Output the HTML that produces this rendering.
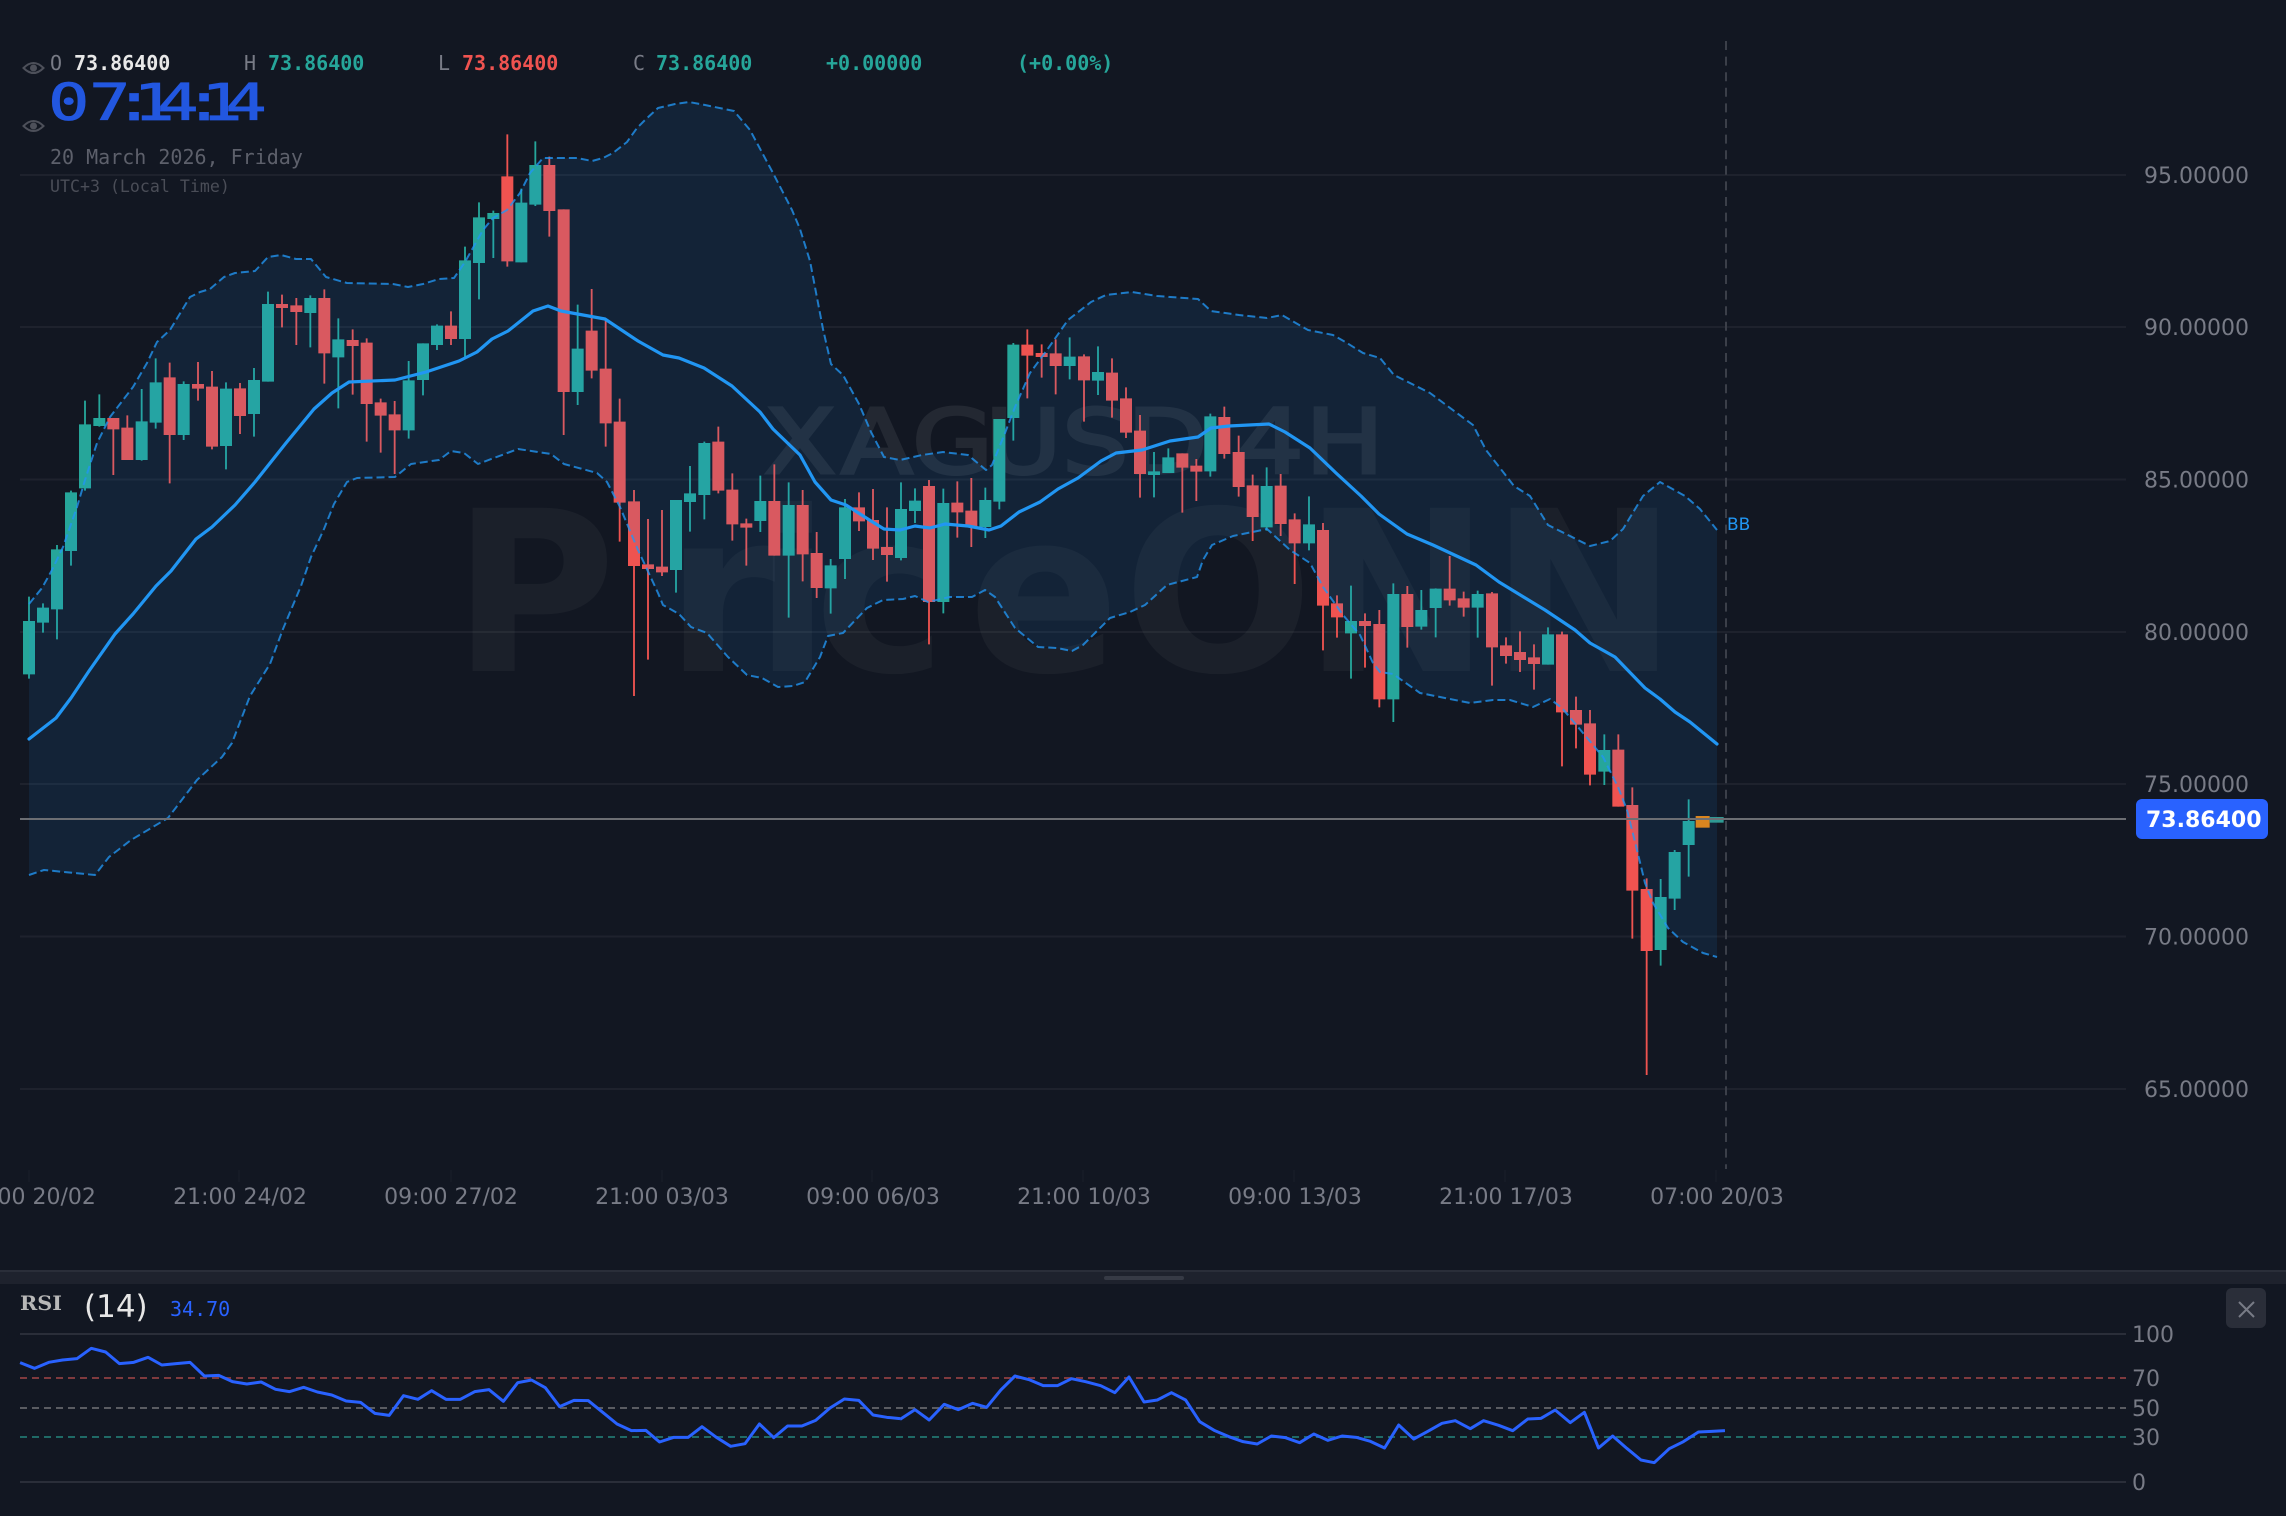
<!DOCTYPE html>
<html lang="en">
<head>
<meta charset="utf-8">
<title>XAGUSD 4H - PriceONN</title>
<style>
html,body{margin:0;padding:0;width:2286px;height:1516px;overflow:hidden;background:#121722}
svg{display:block;position:absolute;left:0;top:0}
.w,.b{fill:none}
.w{stroke-width:5.5}
.b{stroke-width:36}
.g{stroke:#26a69a}
.r{stroke:#ef5350}
.m{font-family:"DejaVu Sans Mono","Liberation Mono",monospace}
.s{font-family:"DejaVu Sans","Liberation Sans",sans-serif}
.ax{font-size:22px;fill:#787b86}
</style>
</head>
<body>
<svg width="2286" height="1516" viewBox="0 0 2286 1516" xmlns="http://www.w3.org/2000/svg">
<rect width="2286" height="1516" fill="#121722"/>

<!-- watermarks -->
<text class="s" font-weight="700" font-size="224" fill="#fff" fill-opacity=".04" y="671" x="452 665 754 814 968 1123 1303 1490">PriceONN</text>
<g style="opacity:.07" transform="translate(0,473) scale(1.18,1)">
<text class="s" font-size="89" fill="#fff" stroke="#fff" stroke-width="3" y="0" x="647.500 712.700 772.900 834.700 900 955 1040 1048.300 1106">XAGUSD 4H</text>
</g>

<!-- grid -->
<g stroke="#fff" stroke-opacity=".05" stroke-width="2">
<path d="M20 175H2126M20 327H2126M20 479.5H2126M20 632H2126M20 784H2126M20 936.5H2126M20 1089H2126"/>
<path d="M29 1170V1182M239 1170V1182M451 1170V1182M662 1170V1182M872 1170V1182M1083 1170V1182M1294 1170V1182M1505 1170V1182M1716 1170V1182" stroke-opacity=".02"/>
</g>

<!-- candles -->
<g transform="translate(10,280) scale(.33333)">
<path class="w g" d="M57 950V1196M99 970V1058M141 795V1078M183 632V857M225 362V632M268 343V440M395 327V542M437 235V446M521 304V480M648 307V568M732 264V470M774 35V305M901 46V202M985 115V385"/>
<path class="b g" d="M57 1023V1183M99 983V1028M141 808V988M183 637V813M225 433V625M268 414V438M395 424V540M437 307V428M521 312V465M648 326V498M732 300V402M774 72V305M901 54V99M985 178V232"/>
<path class="w r" d="M310 414V585M352 406V540M479 248V610M564 246V362M606 273V508M690 309V462M816 44V142M859 54V195M943 28V311M1028 148V344"/>
<path class="b r" d="M310 414V448M352 443V540M479 292V465M564 312V326M606 320V500M690 325V408M816 72V84M859 76V96M943 54V220M1028 180V198"/>
</g>
<g transform="translate(350,120) scale(.33333)">
<path class="w g" d="M176 723V956M219 670V826M261 613V690M345 380V712M387 247V538M430 272V414M514 206V427M556 64V258M683 554V855M978 1140V1418M1020 1038V1235"/>
<path class="b g" d="M176 781V931M219 670V780M261 617V675M345 421V657M387 292V429M430 279V297M514 248V427M556 135V254M683 686V816M978 1140V1350M1020 1120V1146"/>
<path class="w r" d="M50 655V965M92 836V998M134 843V1062M303 574V675M472 43V440M598 110V350M641 268V945M725 507V775M767 600V980M809 836V1265M852 1110V1728M894 1197V1619M936 1170V1368"/>
<path class="b r" d="M50 668V852M92 847V887M134 883V931M303 617V657M472 169V424M598 135V273M641 268V816M725 632V752M767 746V910M809 905V1148M852 1144V1338M894 1333V1347M936 1340V1357"/>
</g>
<g transform="translate(690,400) scale(.33333)">
<path class="w g" d="M43 125V358M211 227V396M296 247V653M422 477V641M465 297V537M633 247V481M675 265V369M760 266V640M886 263V414M928 57V328M970 -171V122"/>
<path class="b g" d="M43 129V285M211 303V363M296 315V467M422 496V565M465 322V477M633 327V474M675 302V333M760 309V606M886 300V381M928 57V305M970 -166V54"/>
<path class="w r" d="M85 80V280M127 220V422M169 356V497M253 193V467M338 270V544M380 396V594M507 277V393M549 267V480M591 322V545M717 240V733M802 244V413M844 234V441M1012 -212V-5"/>
<path class="b r" d="M85 125V272M127 269V373M169 370V383M253 303V467M338 315V463M380 459V564M507 322V364M549 360V446M591 441V465M717 258V606M802 308V337M844 332V382M1012 -166V-133"/>
</g>
<g transform="translate(1030,320) scale(.33333)">
<path class="w g" d="M119 52V178M204 79V225M372 396V532M415 385V459M541 281V470M710 442V632M837 529V691M963 797V1076"/>
<path class="b g" d="M119 110V138M204 156V182M372 454V465M415 412V459M541 289V454M710 498V622M837 613V670M963 903V940"/>
<path class="w r" d="M35 73V173M77 58V223M162 103V305M246 115V293M288 202V354M330 285V533M457 400V578M499 417V543M583 260V416M626 347V530M668 464V663M752 462V648M794 580V792M879 609V991M921 826V953M1005 880V1043"/>
<path class="b r" d="M35 99V111M77 100V138M162 109V181M246 158V242M288 235V338M330 332V462M457 400V443M499 437V455M583 291V402M626 396V501M668 496V591M752 497V612M794 598V670M879 630V857M921 850V892M1005 903V918"/>
</g>
<g transform="translate(1370,520) scale(.33333)">
<path class="w g" d="M70 190V606M154 210V329M197 205V352M323 212V353M534 322V434M703 643V795M872 1077V1337M914 990V1170M956 838V1070"/>
<path class="b g" d="M70 222V538M154 270V320M197 206V264M323 222V263M534 343V434M703 690V755M872 1131V1290M914 996V1136M956 903V975"/>
<path class="w r" d="M28 270V562M112 198V383M239 108V257M281 215V290M366 216V497M408 352V431M450 334V456M492 373V509M576 335V739M618 530V685M660 570V796M745 643V860M787 802V1256M830 1075V1665"/>
<path class="b r" d="M28 312V538M112 222V321M239 206V241M281 235V263M366 220V382M408 376V408M450 396V420M492 412V432M576 343V577M618 570V614M660 610V764M745 689V860M787 855V1112M830 1107V1293"/>
</g>

<!-- Bollinger fill -->
<polygon fill="#2196f3" fill-opacity=".1" points="29,604 42,588 52,570 63,547 77,507 85,480 97,443 110,417 133,387 147,363 157,342 170,330 190,297 200,292 210,289 224,277 235,273 255,271 268,257 281,255 296,259 311,259 326,277 347,283 393,284 408,287 423,284 439,279 454,278 465,262 483,230 493,218 507,210 520,193 530,173 543,158 550,158 577,158 592,161 603,158 613,153 627,142 637,128 645,120 658,108 675,104 689,102 705,105 734,111 750,130 773,173 792,210 800,229 810,261 823,329 831,364 843,375 859,404 871,432 884,457 900,460 922,455 943,452 968,455 986,470 992,465 1005,433 1015,407 1030,373 1047,350 1068,320 1091,302 1106,295 1132,292 1157,296 1198,299 1211,311 1239,315 1267,318 1282,315 1308,330 1333,335 1347,343 1363,353 1380,358 1394,375 1430,393 1473,425 1486,450 1514,486 1530,496 1548,525 1570,536 1590,546 1610,541 1623,529 1643,496 1660,482 1685,496 1700,509 1717,530 1717,957 1703,953 1683,942 1668,928 1653,903 1645,883 1637,850 1627,810 1618,787 1603,757 1583,733 1562,708 1550,699 1533,707 1510,700 1493,700 1470,703 1420,693 1393,674 1380,672 1373,663 1360,635 1343,615 1323,587 1310,563 1290,550 1267,529 1233,536 1212,545 1203,560 1197,577 1167,585 1145,605 1130,612 1110,618 1083,645 1072,651 1057,648 1038,647 1015,628 995,597 985,590 972,597 950,597 928,602 915,596 903,599 883,600 867,608 843,633 828,636 820,657 805,682 793,686 778,687 762,678 747,675 728,657 707,633 691,627 679,614 663,605 658,593 638,550 620,507 607,482 597,473 564,464 551,454 518,449 478,464 464,453 451,451 439,460 411,464 395,477 357,478 347,482 334,504 324,529 311,557 301,586 283,629 270,664 250,696 232,743 222,757 197,780 168,818 131,840 109,857 95,875 44,870 29,875"/>

<!-- live candles -->
<g transform="translate(1370,520) scale(.33333)" fill="none" stroke-width="42">
<path stroke="#d9851f" d="M998 888V923"/>
<path stroke="#2f9a94" d="M1040 891V908"/>
</g>

<!-- Bollinger lines -->
<g fill="none" stroke="#2196f3" stroke-linejoin="round">
<polyline stroke-opacity=".78" stroke-width="2" stroke-dasharray="8 4" points="29,604 42,588 52,570 63,547 77,507 85,480 97,443 110,417 133,387 147,363 157,342 170,330 190,297 200,292 210,289 224,277 235,273 255,271 268,257 281,255 296,259 311,259 326,277 347,283 393,284 408,287 423,284 439,279 454,278 465,262 483,230 493,218 507,210 520,193 530,173 543,158 550,158 577,158 592,161 603,158 613,153 627,142 637,128 645,120 658,108 675,104 689,102 705,105 734,111 750,130 773,173 792,210 800,229 810,261 823,329 831,364 843,375 859,404 871,432 884,457 900,460 922,455 943,452 968,455 986,470 992,465 1005,433 1015,407 1030,373 1047,350 1068,320 1091,302 1106,295 1132,292 1157,296 1198,299 1211,311 1239,315 1267,318 1282,315 1308,330 1333,335 1347,343 1363,353 1380,358 1394,375 1430,393 1473,425 1486,450 1514,486 1530,496 1548,525 1570,536 1590,546 1610,541 1623,529 1643,496 1660,482 1685,496 1700,509 1717,530"/>
<polyline stroke-opacity=".78" stroke-width="2" stroke-dasharray="8 4" points="29,875 44,870 95,875 109,857 131,840 168,818 197,780 222,757 232,743 250,696 270,664 283,629 301,586 311,557 324,529 334,504 347,482 357,478 395,477 411,464 439,460 451,451 464,453 478,464 518,449 551,454 564,464 597,473 607,482 620,507 638,550 658,593 663,605 679,614 691,627 707,633 728,657 747,675 762,678 778,687 793,686 805,682 820,657 828,636 843,633 867,608 883,600 903,599 915,596 928,602 950,597 972,597 985,590 995,597 1015,628 1038,647 1057,648 1072,651 1083,645 1110,618 1130,612 1145,605 1167,585 1197,577 1203,560 1212,545 1233,536 1267,529 1290,550 1310,563 1323,587 1343,615 1360,635 1373,663 1380,672 1393,674 1420,693 1470,703 1493,700 1510,700 1533,707 1550,699 1562,708 1583,733 1603,757 1618,787 1627,810 1637,850 1645,883 1653,903 1668,928 1683,942 1703,953 1717,957"/>
<polyline stroke-width="3.2" stroke-linecap="round" points="29,739 56,718 71,698 89,671 115,634 133,614 156,586 171,571 196,539 212,527 235,505 255,482 286,443 314,409 332,393 349,382 395,380 426,372 459,361 477,352 492,339 508,331 533,311 548,306 561,311 605,319 638,341 663,355 679,358 704,368 732,386 760,412 773,429 800,455 815,482 831,500 846,505 871,521 884,529 900,530 915,526 930,528 945,524 968,526 989,530 1001,526 1019,512 1040,502 1058,489 1078,478 1101,461 1116,453 1142,450 1170,441 1198,437 1211,428 1229,426 1269,424 1285,432 1310,448 1336,473 1361,496 1379,514 1407,534 1433,545 1476,565 1499,582 1545,610 1575,630 1590,643 1615,657 1645,688 1660,699 1675,712 1690,722 1717,744"/>
</g>

<!-- crosshair + price line -->
<path d="M1726 41V1169" stroke="#3b3f49" stroke-width="2" stroke-dasharray="9 6.6" fill="none"/>
<path d="M20 819H2126" stroke="#6c6e73" stroke-width="2" fill="none"/>

<text class="s" x="1727" y="530" font-size="17" fill="#2196f3">BB</text>

<!-- price axis -->
<g class="s ax">
<text x="2144" y="183">95.00000</text>
<text x="2144" y="335">90.00000</text>
<text x="2144" y="487.500">85.00000</text>
<text x="2144" y="640">80.00000</text>
<text x="2144" y="792">75.00000</text>
<text x="2144" y="944.500">70.00000</text>
<text x="2144" y="1097">65.00000</text>
</g>
<rect x="2136" y="799" width="132" height="40" rx="6" fill="#2962ff"/>
<text class="s" x="2146" y="827" font-size="22" font-weight="700" fill="#fff">73.86400</text>

<!-- time axis -->
<g class="s ax" text-anchor="middle">
<text x="29" y="1204">09:00 20/02</text>
<text x="240" y="1204">21:00 24/02</text>
<text x="451" y="1204">09:00 27/02</text>
<text x="662" y="1204">21:00 03/03</text>
<text x="873" y="1204">09:00 06/03</text>
<text x="1084" y="1204">21:00 10/03</text>
<text x="1295" y="1204">09:00 13/03</text>
<text x="1506" y="1204">21:00 17/03</text>
<text x="1717" y="1204">07:00 20/03</text>
</g>

<!-- legend -->
<g class="m" font-size="20">
<text x="50" y="70" fill="#787b86">O</text>
<text x="74" y="70" fill="#e8e8e8" font-weight="700">73.86400</text>
<text x="244" y="70" fill="#787b86">H</text>
<text x="268" y="70" fill="#26a69a" font-weight="700">73.86400</text>
<text x="438" y="70" fill="#787b86">L</text>
<text x="462" y="70" fill="#ef5350" font-weight="700">73.86400</text>
<text x="633" y="70" fill="#787b86">C</text>
<text x="656" y="70" fill="#26a69a" font-weight="700">73.86400</text>
<text x="826" y="70" fill="#26a69a" font-weight="700">+0.00000</text>
<text x="1017" y="70" fill="#26a69a" font-weight="700">(+0.00%)</text>
</g>
<g transform="translate(0,120) scale(1.35,1)">
<text class="m" y="0" x="35.600 66 84 98.700 116.500 135.800 149 167" font-size="51" fill="#2257e0" stroke="#2257e0" stroke-width=".8">07:14:14</text>
</g>
<text class="m" x="50" y="164" font-size="20" fill="#5d606b">20 March 2026, Friday</text>
<text class="m" x="50" y="192" font-size="16.600" fill="#4a4d57">UTC+3 (Local Time)</text>

<!-- eye icons -->
<g fill="none" stroke="#4d505a" stroke-width="2">
<path d="M23.500 68Q33.500 58 43.500 68Q33.500 78 23.500 68Z"/>
<circle cx="33.500" cy="68" r="3.500" fill="#4d505a" stroke="none"/>
<path d="M23.500 126Q33.500 116 43.500 126Q33.500 136 23.500 126Z"/>
<circle cx="33.500" cy="126" r="3.500" fill="#4d505a" stroke="none"/>
</g>

<!-- pane separator -->
<rect x="0" y="1270" width="2286" height="14" fill="#1e222d"/>
<rect x="0" y="1270" width="2286" height="2" fill="#2a2e39"/>
<rect x="1104" y="1276" width="80" height="4" rx="2" fill="#363a45"/>

<!-- RSI pane -->
<text x="20" y="1310" font-family="'DejaVu Serif','Liberation Serif',serif" font-weight="700" font-size="20" fill="#b8b8b8" textLength="42" lengthAdjust="spacingAndGlyphs">RSI</text>
<text class="s" x="84" y="1317" font-size="31" fill="#e6e6e6">(14)</text>
<text class="m" x="170" y="1316" font-size="20" fill="#2962ff">34.70</text>

<rect x="2226" y="1288" width="40" height="40" rx="6" fill="#2a2e39"/>
<path d="M2239 1302L2254 1317M2254 1302L2239 1317" stroke="#787b86" stroke-width="2" fill="none"/>

<g fill="none" stroke-width="2">
<path d="M20 1334H2126M20 1482H2126" stroke="#2a2e39"/>
<path d="M20 1378H2126" stroke="#7f3a3e" stroke-dasharray="7 5"/>
<path d="M20 1408H2126" stroke="#5a5c62" stroke-dasharray="7 5"/>
<path d="M20 1437H2126" stroke="#1f6a66" stroke-dasharray="7 5"/>
</g>

<g fill="none" stroke="#2962ff" stroke-width="3" stroke-linejoin="round">
<polyline vector-effect="non-scaling-stroke" transform="translate(0,1240) scale(.574,.33333)" points="35,368 60,385 85,367 109,360 134,356 159,325 184,336 208,371 233,367 258,352 282,375 307,371 331,367 356,408 381,406 405,425 430,432 455,426 480,448 504,455 529,442 553,456 578,465 603,483 628,487 653,520 678,526 703,467 728,478 752,452 777,478 802,478 827,455 852,449 877,484 902,428 926,420 950,443 975,500 1000,481 1025,482 1050,517 1075,552 1100,572 1125,571 1149,606 1174,592 1199,592 1223,560 1248,592 1273,619 1298,611 1323,552 1348,593 1372,558 1397,558 1421,541 1446,504 1471,477 1496,481 1521,525 1545,532 1568,536"/>
<polyline vector-effect="non-scaling-stroke" transform="translate(900,1240) scale(.8842,.33333)" points="0,538 17,509 33,540 50,493 66,509 82,490 98,502 114,450 130,408 146,419 162,437 178,437 194,416 210,425 227,437 243,458 259,411 276,486 291,480 307,458 323,480 339,545 356,572 372,590 388,605 404,612 420,588 436,593 452,608 468,582 484,601 500,588 516,592 532,604 548,624 564,555 581,597 597,574 613,550 628,542 645,566 660,542 677,556 693,572 710,537 725,535 741,510 758,548 774,517 790,624 806,588 822,625 838,660 853,668 870,626 886,605 903,576 918,574 933,572"/>
</g>

<g class="s ax">
<text x="2132" y="1342">100</text>
<text x="2132" y="1386">70</text>
<text x="2132" y="1416">50</text>
<text x="2132" y="1445">30</text>
<text x="2132" y="1490">0</text>
</g>
</svg>
</body>
</html>
